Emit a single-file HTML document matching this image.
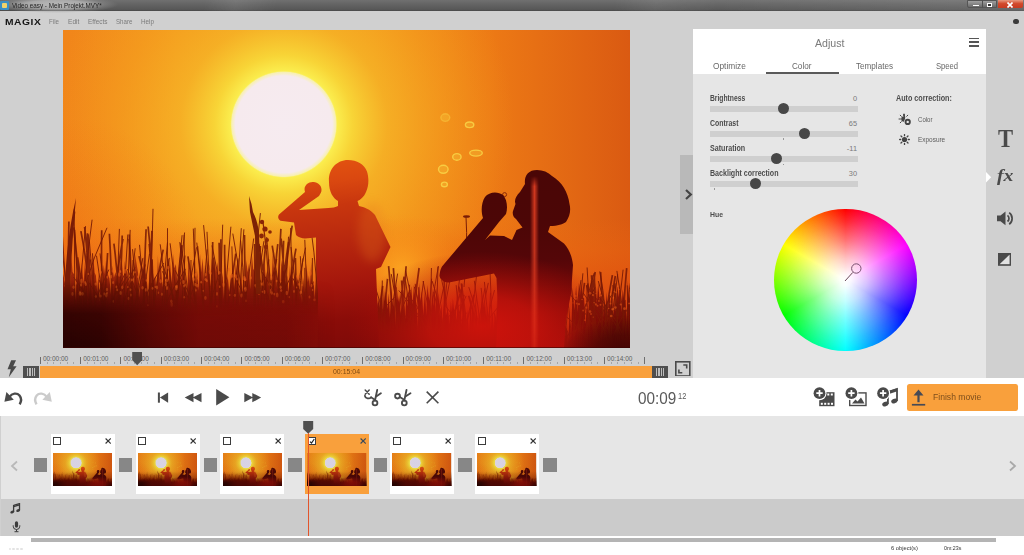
<!DOCTYPE html>
<html><head><meta charset="utf-8">
<style>
*{box-sizing:border-box;margin:0;padding:0}
html,body{width:1024px;height:555px;overflow:hidden;background:#d0d0d0;font-family:"Liberation Sans",sans-serif;color:#444}
.a{position:absolute}
.t{position:absolute;white-space:nowrap;line-height:1}
#title{left:0;top:0;width:1024px;height:11.3px;background:linear-gradient(100deg,rgba(255,255,255,0) 20%,rgba(255,255,255,.08) 23%,rgba(255,255,255,0) 27%,rgba(255,255,255,0) 60%,rgba(255,255,255,.07) 64%,rgba(255,255,255,.02) 70%,rgba(255,255,255,.1) 100%),linear-gradient(#707070 0,#626262 45%,#585858 85%,#484848 100%)}
#panel{left:693px;top:29px;width:292.5px;height:349px;background:#e6e6e6}
#phead{left:0;top:0;width:292.5px;height:45px;background:#fff}
.tab{font-size:9.3px;color:#686868;top:32.5px}
.lbl{font-size:8.2px;font-weight:bold;color:#4c4c4c;left:16.5px;margin-top:1.2px}
.val{font-size:7.4px;color:#7a7a7a;text-align:right;width:30px;left:134px}
.track{position:absolute;left:16.5px;width:148.5px;height:6px;background:#cfcfcf}
.knob{position:absolute;width:11px;height:11px;border-radius:50%;background:#484848}
#transport{left:0;top:378.3px;width:1024px;height:38px;background:#fff}
#story{left:1px;top:416px;width:1023px;height:83.2px;background:#e6e6e6}
#audio{left:1px;top:499.200px;width:1023px;height:36.500px;background:#cbcbcb}
#status{left:0;top:536px;width:1024px;height:19px;background:#fff}
.card{position:absolute;top:434px;width:64px;height:59.5px;background:#fff}
.card.sel{background:#f9a03c}
.cb{position:absolute;left:2.5px;top:2.7px;width:8.3px;height:8.3px;border:1.1px solid #3c3c3c;background:#fff}
.tr{position:absolute;top:458.3px;width:13.5px;height:13.5px;background:#878787}
.rl{font-size:6.5px;color:#5e5e5e;top:355.5px}
</style></head><body>
<!-- title bar -->
<div id="title" class="a"></div>
<div class="a" style="left:-6px;top:-4px;width:124px;height:17px;background:radial-gradient(ellipse closest-side at center,rgba(200,200,200,.85) 0,rgba(190,190,190,.75) 50%,rgba(150,150,150,.4) 78%,rgba(110,110,110,0) 100%)"></div>
<div class="a" style="left:0;top:.5px;width:8.5px;height:9px;background:#3c8fc4;border-radius:1px"></div>
<div class="a" style="left:2px;top:2.5px;width:5px;height:5px;background:#f2d36a;border-radius:1px"></div>
<div class="t" id="ttl" style="transform-origin:0 0;transform:scaleX(0.9006);left:12px;top:1.8px;font-size:7px;color:#222">Video easy - Mein Projekt.MVY*</div>
<div class="a" style="left:967px;top:0;width:30px;height:8px;background:linear-gradient(#a0a0a0,#6a6a6a);border-radius:0 0 0 2px;border:0.5px solid #555"></div>
<div class="a" style="left:982px;top:0;width:1px;height:8px;background:#505050"></div>
<div class="a" style="left:997.5px;top:0;width:25px;height:8px;background:linear-gradient(#e89a80,#d24a2c 45%,#c83a20);border-radius:0 0 2px 0"></div>
<div class="a" style="left:972.500px;top:4.500px;width:6px;height:1.500px;background:#fff"></div>
<div class="a" style="left:987px;top:2.500px;width:5px;height:4.500px;border:1.300px solid #fff;background:#333"></div>
<svg class="a" style="left:1007px;top:1.500px" width="6" height="6" viewBox="0 0 6 6"><path d="M.5,.5L5.5,5.5M5.5,.5L.5,5.5" stroke="#fff" stroke-width="1.600"/></svg>
<!-- menu -->
<div class="t" id="magix" style="transform-origin:0 0;transform:scaleX(1.0484);left:4.700px;top:16.800px;font-size:9.800px;font-weight:bold;color:#151515;letter-spacing:0.500px">MAGIX</div>
<div class="t m" id="m1" style="transform-origin:0 0;transform:scaleX(0.8499);left:49px;top:17.800px;font-size:7.300px;color:#7c7c7c">File</div>
<div class="t m" id="m2" style="transform-origin:0 0;transform:scaleX(0.9063);left:67.500px;top:17.800px;font-size:7.300px;color:#7c7c7c">Edit</div>
<div class="t m" id="m3" style="transform-origin:0 0;transform:scaleX(0.8789);left:87.500px;top:17.800px;font-size:7.300px;color:#7c7c7c">Effects</div>
<div class="t m" id="m4" style="transform-origin:0 0;transform:scaleX(0.8417);left:115.500px;top:17.800px;font-size:7.300px;color:#7c7c7c">Share</div>
<div class="t m" id="m5" style="transform-origin:0 0;transform:scaleX(0.8658);left:140.500px;top:17.800px;font-size:7.300px;color:#7c7c7c">Help</div>
<div class="a" style="left:1013.200px;top:18.500px;width:5.400px;height:5.400px;border-radius:50%;background:#3a3a3a"></div>
<svg class="a" style="left:63px;top:30px" width="567" height="318" viewBox="63 30 567 318" preserveAspectRatio="none">
<defs>
<linearGradient id="sky" x1="0" x2="1" y1="0" y2="0">
<stop offset="0" stop-color="#f1851a"/><stop offset="0.2" stop-color="#f4951c"/><stop offset="0.55" stop-color="#f3921a"/><stop offset="0.75" stop-color="#ed7a15"/><stop offset="1" stop-color="#da5a12"/>
</linearGradient>
<radialGradient id="halo" gradientUnits="userSpaceOnUse" cx="283.800" cy="124.300" r="230">
<stop offset="0" stop-color="#fbf050"/><stop offset="0.225" stop-color="#fbf050"/><stop offset="0.3" stop-color="#f8d838" stop-opacity=".95"/><stop offset="0.45" stop-color="#f6b828" stop-opacity=".75"/><stop offset="0.7" stop-color="#f5a420" stop-opacity=".5"/><stop offset="1" stop-color="#f39a1e" stop-opacity="0"/>
</radialGradient>
<radialGradient id="sun" gradientUnits="userSpaceOnUse" cx="283.800" cy="124.300" r="53.800">
<stop offset="0" stop-color="#f6ebf0"/><stop offset="0.9" stop-color="#f6eaee"/><stop offset="0.97" stop-color="#f8f0b0"/><stop offset="1" stop-color="#fbf050" stop-opacity="0"/>
</radialGradient>
<linearGradient id="warm" gradientUnits="userSpaceOnUse" x1="0" x2="0" y1="218" y2="310">
<stop offset="0" stop-color="#ee6a10" stop-opacity="0"/><stop offset=".35" stop-color="#ec6210" stop-opacity=".36"/><stop offset=".67" stop-color="#e4500e" stop-opacity=".58"/><stop offset="1" stop-color="#d83a0c" stop-opacity=".76"/>
</linearGradient>
<linearGradient id="gm" gradientUnits="userSpaceOnUse" x1="0" x2="0" y1="254" y2="322">
<stop offset="0" stop-color="#9a2408" stop-opacity=".72"/><stop offset="0.5" stop-color="#861608" stop-opacity=".93"/><stop offset="1" stop-color="#700c06"/>
</linearGradient>
<linearGradient id="haze" gradientUnits="userSpaceOnUse" x1="0" x2="0" y1="262" y2="348">
<stop offset="0" stop-color="#9a1408"/><stop offset="0.45" stop-color="#8e0e08"/><stop offset="1" stop-color="#860c08"/>
</linearGradient>
<linearGradient id="boy" gradientUnits="userSpaceOnUse" x1="330" x2="350" y1="160" y2="348">
<stop offset="0" stop-color="#e25210"/><stop offset="0.11" stop-color="#da4810"/><stop offset="0.24" stop-color="#c8360e"/><stop offset="0.43" stop-color="#b8280e"/><stop offset="0.66" stop-color="#a4160c"/><stop offset="0.85" stop-color="#8a0c08"/><stop offset="1" stop-color="#800a08"/>
</linearGradient>
<linearGradient id="man" gradientUnits="userSpaceOnUse" x1="0" x2="0" y1="170" y2="348">
<stop offset="0" stop-color="#4a0606"/><stop offset="0.3" stop-color="#4c0606"/><stop offset="0.5" stop-color="#540608"/><stop offset="0.65" stop-color="#6e0808"/><stop offset="0.8" stop-color="#8e0a08"/><stop offset="1" stop-color="#a80c0a"/>
</linearGradient>
<radialGradient id="glow" gradientUnits="userSpaceOnUse" cx="482" cy="326" r="135" gradientTransform="matrix(1 0 0 .55 0 146.7)">
<stop offset="0" stop-color="#d8140c" stop-opacity=".85"/><stop offset="0.4" stop-color="#cc140c" stop-opacity=".7"/><stop offset="0.7" stop-color="#ba120a" stop-opacity=".35"/><stop offset="1" stop-color="#b00c08" stop-opacity="0"/>
</radialGradient>
<radialGradient id="hot" gradientUnits="userSpaceOnUse" cx="402" cy="272" r="60">
<stop offset="0" stop-color="#ffb024" stop-opacity=".85"/><stop offset="0.5" stop-color="#fa9a1c" stop-opacity=".5"/><stop offset="1" stop-color="#f68a18" stop-opacity="0"/>
</radialGradient>
<linearGradient id="leftdark" gradientUnits="userSpaceOnUse" x1="63" x2="335" y1="0" y2="0">
<stop offset="0" stop-color="#1c0101" stop-opacity=".92"/><stop offset=".14" stop-color="#1c0101" stop-opacity=".85"/><stop offset=".32" stop-color="#1e0101" stop-opacity=".5"/><stop offset=".5" stop-color="#220202" stop-opacity=".24"/><stop offset=".82" stop-color="#220202" stop-opacity=".2"/><stop offset="1" stop-color="#220202" stop-opacity="0"/>
</linearGradient>
<radialGradient id="rightdark" gradientUnits="userSpaceOnUse" cx="625" cy="352" r="62" gradientTransform="matrix(1 0 0 .55 0 158.4)">
<stop offset="0" stop-color="#2a0202" stop-opacity=".75"/><stop offset=".5" stop-color="#2a0202" stop-opacity=".5"/><stop offset="1" stop-color="#2a0202" stop-opacity="0"/>
</radialGradient>
<linearGradient id="fadeb" gradientUnits="userSpaceOnUse" x1="0" x2="0" y1="280" y2="348">
<stop offset="0" stop-color="#fff" stop-opacity="0"/><stop offset=".5" stop-color="#fff" stop-opacity=".85"/><stop offset="1" stop-color="#fff" stop-opacity="1"/>
</linearGradient>
<mask id="mb"><rect x="63" y="280" width="567" height="68" fill="url(#fadeb)"/></mask>
<filter id="bl" x="-10%" y="-30%" width="120%" height="160%" color-interpolation-filters="sRGB"><feGaussianBlur stdDeviation="9"/></filter>
<filter id="bl2" x="-50%" y="-50%" width="200%" height="200%" color-interpolation-filters="sRGB"><feGaussianBlur stdDeviation="5"/></filter>
<linearGradient id="streak" gradientUnits="userSpaceOnUse" x1="530" x2="539" y1="0" y2="0"><stop offset="0" stop-color="#ff4a28" stop-opacity="0"/><stop offset=".5" stop-color="#ff4a28" stop-opacity=".75"/><stop offset="1" stop-color="#ff4a28" stop-opacity="0"/></linearGradient>
<linearGradient id="sfade" gradientUnits="userSpaceOnUse" x1="0" x2="0" y1="176" y2="348"><stop offset="0" stop-color="#fff" stop-opacity="0"/><stop offset=".06" stop-color="#fff" stop-opacity="1"/><stop offset=".45" stop-color="#fff" stop-opacity=".85"/><stop offset="1" stop-color="#fff" stop-opacity=".35"/></linearGradient>
<mask id="ms"><rect x="530" y="176" width="9" height="172" fill="url(#sfade)"/></mask>
<radialGradient id="ll" gradientUnits="userSpaceOnUse" cx="55" cy="262" r="150"><stop offset="0" stop-color="#ee6210" stop-opacity=".42"/><stop offset=".5" stop-color="#ee6210" stop-opacity=".2"/><stop offset="1" stop-color="#ee6210" stop-opacity="0"/></radialGradient>
<clipPath id="vc"><rect x="63" y="30" width="567" height="318"/></clipPath>
</defs>
<g id="scene" clip-path="url(#vc)"><rect x="63" y="30" width="567" height="318" fill="url(#sky)"/>
<rect x="63" y="30" width="567" height="318" fill="url(#halo)"/>
<circle cx="283.800" cy="124.300" r="53.800" fill="url(#sun)"/>
<rect x="63" y="215" width="567" height="133" fill="url(#warm)"/>
<rect x="63" y="120" width="160" height="228" fill="url(#ll)"/>
<rect x="340" y="210" width="125" height="125" fill="url(#hot)"/>
<g fill="#f7c23a" fill-opacity=".35" stroke="#f9d84a" stroke-width="1.400" stroke-opacity=".8">
<ellipse cx="445.300" cy="117.600" rx="4.500" ry="3.800" stroke-opacity=".4"/><ellipse cx="469.600" cy="124.800" rx="4.200" ry="2.800"/><ellipse cx="476" cy="153.100" rx="6.300" ry="3"/><ellipse cx="456.900" cy="156.900" rx="4.200" ry="3.300"/><ellipse cx="443.300" cy="169.300" rx="4.800" ry="4"/><ellipse cx="444.400" cy="184.400" rx="3" ry="2.300"/>
</g>
<path d="M60,350 L60.0,270.9 L61.6,296.9 L63.3,273.8 L65.0,284.3 L66.4,278.6 L67.8,306.7 L68.9,267.3 L70.0,288.1 L71.4,256.3 L72.5,271.9 L74.2,274.4 L75.3,300.3 L76.3,270.8 L77.3,280.9 L79.0,261.0 L80.1,290.7 L81.8,262.9 L83.5,283.7 L85.0,260.9 L86.8,284.7 L88.5,277.4 L89.7,294.7 L90.8,259.5 L91.7,275.5 L93.2,256.1 L94.7,272.8 L95.9,275.6 L97.2,292.0 L98.5,272.9 L99.5,302.4 L100.4,274.0 L102.1,284.4 L103.7,264.8 L105.1,275.0 L106.0,260.3 L107.8,274.3 L109.4,278.3 L111.1,295.2 L112.3,265.6 L113.9,277.8 L115.5,272.1 L117.2,282.9 L118.9,255.2 L120.1,277.4 L121.9,261.2 L123.6,282.1 L124.8,260.6 L125.8,272.2 L126.9,269.5 L128.7,282.8 L129.6,276.7 L131.0,294.8 L132.1,267.3 L133.7,286.4 L135.0,254.3 L136.8,265.0 L138.1,273.1 L139.1,297.8 L140.9,268.1 L142.5,280.3 L143.8,256.6 L145.4,272.5 L146.7,277.0 L148.4,306.5 L149.7,264.7 L151.3,284.3 L152.4,262.7 L153.5,280.2 L155.3,276.0 L156.7,296.0 L157.9,255.1 L159.1,280.8 L160.7,261.7 L162.4,287.2 L163.9,268.9 L165.5,286.2 L167.0,259.7 L168.3,285.1 L169.9,260.1 L171.6,283.0 L173.0,253.3 L174.4,268.3 L175.9,264.1 L177.6,287.1 L179.2,261.3 L180.7,286.1 L182.3,261.4 L184.0,288.8 L185.5,276.4 L187.2,296.8 L188.6,257.0 L190.3,285.7 L191.6,269.6 L193.1,294.2 L194.2,271.7 L195.6,295.0 L196.9,268.0 L198.5,290.7 L200.1,253.7 L201.1,272.5 L202.6,258.3 L204.1,280.9 L205.0,264.3 L206.1,275.4 L207.2,260.6 L208.2,274.5 L209.2,264.2 L210.4,286.4 L211.8,258.7 L213.5,268.7 L214.8,259.7 L216.1,272.0 L217.7,262.0 L218.7,284.2 L219.6,266.1 L220.8,287.7 L222.6,272.6 L223.9,298.9 L225.4,261.9 L226.4,283.8 L227.8,276.0 L229.6,298.1 L230.8,274.4 L231.7,286.6 L233.1,267.8 L234.1,290.4 L235.8,262.0 L237.1,276.5 L238.3,276.3 L239.5,305.6 L241.2,267.3 L242.4,296.9 L243.7,263.0 L244.9,292.7 L246.3,259.9 L247.6,272.3 L249.0,263.6 L250.2,289.3 L251.8,253.3 L253.2,268.8 L255.0,271.8 L256.1,287.1 L257.1,276.7 L258.3,298.9 L259.6,268.5 L261.1,293.3 L262.1,271.2 L263.2,291.9 L264.4,260.1 L265.8,279.4 L267.0,270.9 L268.5,281.6 L269.6,263.9 L271.3,291.7 L272.7,253.3 L274.3,271.9 L275.7,270.0 L277.2,289.6 L278.9,262.3 L280.2,289.3 L281.3,260.1 L282.9,271.4 L284.6,269.7 L285.8,285.4 L287.4,274.9 L288.5,294.4 L289.9,264.9 L291.1,278.0 L292.5,272.5 L293.5,287.1 L295.1,272.0 L296.6,282.5 L298.1,276.5 L299.9,300.5 L300.9,280.2 L302.0,303.1 L303.7,277.1 L304.8,292.9 L306.5,263.6 L307.9,281.9 L309.0,274.9 L309.9,287.1 L311.2,261.7 L312.1,283.2 L313.7,281.1 L314.7,299.7 L315.9,274.4 L317.2,303.2 L318.5,261.3 L320.0,274.4 L321.5,272.1 L323.2,293.2 L324.6,266.3 L326.0,281.4 L327.6,272.4 L328.6,287.1 L329.9,277.7 L330.9,301.9 L332.4,288.0 L333.9,299.9 L334.9,300.3 L336.0,327.8 L337.4,293.8 L339.0,304.3 L340.5,287.3 L341.6,316.3 L343.1,291.4 L344.1,320.8 L345.6,305.7 L346.6,328.2 L347.8,291.6 L349.0,313.9 L350.3,295.3 L351.3,321.9 L352.8,305.3 L354.1,332.3 L355.4,300.2 L356.8,325.0 L358.1,288.3 L359.0,302.4 L360.0,307.3 L361.3,332.5 L362.2,297.3 L363.9,319.7 L365.2,297.2 L366.2,310.3 L367.2,295.0 L368.5,322.6 L369.5,292.1 L370.6,305.3 L371.8,291.6 L373.1,302.3 L374.9,294.9 L376.6,318.6 L378.1,297.3 L379.9,309.7 L381.4,289.0 L382.9,313.6 L383.9,286.8 L384.8,301.4 L385.8,291.6 L387.6,308.9 L388.8,293.2 L389.9,317.9 L391.5,285.9 L392.6,309.4 L394.3,297.5 L395.6,327.0 L396.5,283.5 L398.1,301.7 L399.1,295.2 L400.9,315.5 L402.1,284.3 L403.0,312.2 L404.4,304.5 L405.3,319.3 L406.3,291.5 L407.2,306.6 L408.5,289.3 L409.4,300.1 L411.2,286.3 L412.6,304.4 L414.0,284.0 L415.1,296.2 L416.5,304.1 L418.0,331.2 L419.1,282.4 L420.4,302.1 L421.9,291.0 L423.3,315.6 L425.0,289.4 L426.3,315.9 L427.4,284.8 L428.6,296.5 L430.2,301.7 L431.4,314.3 L432.4,287.9 L433.4,306.4 L434.8,287.9 L435.7,311.9 L436.7,286.8 L437.8,304.3 L438.8,292.1 L440.0,317.1 L441.4,303.5 L442.9,328.7 L444.3,292.6 L445.9,315.7 L447.7,309.5 L449.2,324.8 L450.9,301.2 L451.9,312.5 L452.9,298.3 L454.4,314.0 L455.4,310.3 L456.8,320.9 L457.7,295.1 L459.0,322.3 L460.7,306.7 L461.8,325.3 L463.1,299.9 L464.0,321.6 L465.6,309.4 L466.6,330.1 L467.6,309.0 L469.0,337.8 L470.6,294.8 L471.8,323.1 L473.1,302.4 L474.4,327.8 L476.1,304.8 L477.9,326.7 L478.9,311.5 L480.1,322.6 L481.9,292.8 L483.3,312.4 L485.0,301.4 L486.1,317.0 L487.2,305.5 L488.4,330.5 L489.6,300.4 L490.7,330.1 L492.3,312.4 L493.8,330.4 L494.8,312.0 L496.2,322.7 L497.2,294.4 L498.8,322.4 L499.8,311.1 L501.0,334.8 L502.7,327.0 L504.3,344.5 L505.2,324.3 L506.7,338.0 L507.9,319.6 L508.8,335.9 L510.1,323.4 L511.6,341.4 L513.4,331.6 L515.1,355.4 L516.6,324.9 L518.3,342.1 L519.7,328.3 L521.1,344.0 L522.0,314.1 L523.2,335.7 L524.8,329.1 L526.0,357.7 L527.2,329.2 L528.1,354.3 L529.6,335.0 L531.3,358.7 L533.0,329.7 L534.4,343.9 L535.8,333.5 L536.9,363.0 L538.3,321.4 L539.2,339.2 L540.3,327.7 L542.0,355.9 L543.4,321.3 L544.4,345.1 L545.8,329.2 L547.1,356.9 L548.2,319.3 L549.3,341.8 L551.0,316.0 L552.5,341.3 L553.6,313.5 L555.0,340.1 L556.7,329.5 L557.9,348.0 L559.3,333.7 L560.5,349.3 L561.9,335.2 L563.0,345.8 L564.0,325.5 L565.5,339.2 L566.5,326.3 L568.0,350.1 L569.6,313.5 L570.9,340.2 L572.7,287.6 L574.3,310.5 L576.1,285.5 L577.6,312.3 L578.9,282.4 L580.0,295.6 L581.0,283.6 L582.4,295.7 L584.0,297.7 L585.6,323.7 L587.2,302.2 L589.0,324.7 L590.7,282.5 L591.7,293.8 L592.8,289.0 L594.1,312.6 L595.7,282.0 L596.9,302.9 L598.2,282.8 L599.6,300.3 L601.1,291.9 L602.9,320.8 L603.9,298.2 L605.4,314.2 L606.4,291.5 L607.6,316.2 L609.4,289.2 L610.5,309.1 L612.1,298.9 L613.5,314.9 L614.7,300.4 L616.0,311.4 L617.3,285.7 L618.8,297.2 L620.0,282.3 L621.3,312.0 L622.7,289.3 L624.4,301.1 L625.6,299.5 L626.5,324.8 L627.8,280.4 L628.9,299.6 L630.1,292.4 L631.1,306.8 L632.9,290.6 L634.2,302.3 L634,350Z" fill="url(#gm)"/>
<path d="M63.0,348 Q65.8,279.9 74.9,211.7M67.1,348 Q65.7,286.4 72.5,224.7M70.1,348 Q64.7,276.2 60.5,204.5M71.5,348 Q67.9,284.6 58.3,221.2M74.2,348 Q75.2,278.7 74.2,209.3M76.0,348 Q79.6,287.0 85.5,226.1M77.7,348 Q79.0,288.9 74.9,229.8M80.6,348 Q83.3,283.9 92.1,219.7M96.1,348 Q94.9,300.6 92.5,253.3M98.2,348 Q94.0,294.7 89.4,241.3M106.8,348 Q107.0,300.7 100.0,253.4M108.6,348 Q103.9,301.8 96.5,255.7M115.0,348 Q117.3,288.5 119.4,228.9M121.2,348 Q124.0,291.2 127.8,234.5M124.0,348 Q129.0,298.2 135.2,248.3M126.7,348 Q126.8,289.0 130.2,229.9M129.0,348 Q134.7,303.1 142.8,258.1M133.5,348 Q131.8,304.0 133.0,259.9M135.7,348 Q131.0,293.4 128.8,238.9M138.1,348 Q141.9,300.9 149.5,253.7M140.9,348 Q138.4,298.6 132.5,249.2M147.5,348 Q145.0,296.4 139.5,244.8M151.0,348 Q150.4,278.4 153.0,208.8M153.9,348 Q154.3,303.7 152.4,259.3M157.9,348 Q154.3,296.0 148.9,244.0M160.4,348 Q161.5,295.1 167.5,242.3M163.2,348 Q162.5,302.9 169.4,257.9M165.6,348 Q168.3,288.1 167.5,228.2M168.5,348 Q167.7,296.2 160.2,244.3M170.9,348 Q176.6,291.6 182.1,235.2M173.1,348 Q178.1,290.3 184.6,232.5M177.2,348 Q173.9,303.3 168.0,258.7M178.7,348 Q182.3,301.8 185.0,255.6M181.6,348 Q177.1,295.6 170.1,243.3M183.4,348 Q185.7,291.4 184.1,234.8M185.3,348 Q186.3,297.6 196.5,247.3M188.2,348 Q186.3,295.1 179.8,242.1M190.5,348 Q190.1,304.0 191.0,260.0M192.8,348 Q190.0,295.7 180.6,243.3M195.7,348 Q193.3,287.9 195.0,227.8M198.4,348 Q195.3,288.3 193.3,228.6M203.8,348 Q202.2,298.7 207.1,249.4M205.3,348 Q203.3,295.3 196.8,242.6M207.2,348 Q203.0,297.1 197.7,246.1M212.1,348 Q209.7,289.9 207.0,231.8M213.8,348 Q209.7,286.5 203.6,225.1M217.5,348 Q221.3,286.4 222.7,224.7M223.5,348 Q224.3,287.4 230.9,226.7M225.7,348 Q223.5,296.8 212.0,245.5M229.4,348 Q232.8,304.2 237.9,260.4M231.8,348 Q234.7,297.2 231.9,246.4M233.5,348 Q237.4,288.1 241.3,228.2M236.4,348 Q239.8,288.7 243.9,229.3M238.9,348 Q235.7,303.2 238.0,258.5M241.3,348 Q245.4,293.3 253.7,238.5M243.7,348 Q245.9,294.2 240.6,240.5M246.2,348 Q243.5,290.8 232.8,233.6M250.8,348 Q254.5,294.6 263.9,241.2M253.2,348 Q252.2,280.6 260.4,213.1M261.8,348 Q262.9,303.7 268.9,259.5M264.3,348 Q264.9,303.6 276.8,259.2M266.4,348 Q264.7,295.9 259.2,243.8M273.3,348 Q272.1,292.5 266.7,237.0M284.8,348 Q285.0,292.3 288.5,236.7M291.8,348 Q294.2,297.9 305.5,247.7M294.4,348 Q291.1,287.9 290.7,227.9M298.5,348 Q297.1,303.1 303.0,258.3M301.0,348 Q297.6,297.5 291.0,247.0M302.9,348 Q305.9,307.9 304.8,267.8M305.8,348 Q303.3,302.1 300.3,256.2M308.7,348 Q306.9,293.9 304.8,239.8M310.6,348 Q312.9,303.0 312.4,258.0M314.7,348 Q318.0,300.7 316.6,253.4M319.9,348 Q318.9,284.1 309.9,220.2M321.6,348 Q323.4,306.0 322.2,264.1M323.5,348 Q323.7,292.6 323.3,237.1M326.0,348 Q329.3,293.5 335.1,239.1M328.7,348 Q332.7,295.0 341.5,242.0M331.2,348 Q328.5,308.6 328.9,269.1M337.1,348 Q335.3,321.9 326.3,295.9M340.2,348 Q339.7,319.7 332.8,291.4M341.9,348 Q341.1,319.7 332.7,291.3M344.1,348 Q344.8,308.3 337.4,268.6M351.9,348 Q348.3,311.2 338.2,274.3M354.5,348 Q350.1,310.2 344.9,272.3M358.5,348 Q356.9,320.3 344.5,292.6M361.2,348 Q360.3,321.5 367.3,295.0M363.3,348 Q364.6,305.8 373.3,263.6M365.3,348 Q363.5,295.1 357.1,242.1M366.9,348 Q363.0,308.0 361.6,268.0M369.0,348 Q367.9,310.1 374.2,272.3M371.0,348 Q369.2,305.6 375.4,263.2M373.5,348 Q370.3,318.7 372.4,289.5M376.2,348 Q374.0,319.3 370.3,290.6M380.6,348 Q382.3,314.2 382.3,280.5M383.3,348 Q381.5,316.8 371.9,285.6M386.4,348 Q386.0,316.5 374.5,284.9M388.6,348 Q390.2,310.8 397.6,273.6M390.6,348 Q394.9,317.6 396.2,287.3M403.0,348 Q398.5,311.0 391.3,274.1M408.4,348 Q409.1,316.3 409.6,284.7M412.9,348 Q411.5,314.7 405.6,281.4M414.5,348 Q415.2,309.3 405.5,270.6M416.9,348 Q417.9,314.5 423.6,281.0M419.6,348 Q417.2,317.6 418.7,287.2M421.9,348 Q420.6,315.9 415.2,283.8M424.2,348 Q424.5,317.4 414.3,286.8M426.3,348 Q429.2,313.4 431.6,278.7M428.5,348 Q430.4,307.1 438.4,266.1M430.7,348 Q430.5,308.0 431.4,268.0M432.6,348 Q436.8,317.2 443.8,286.4M435.2,348 Q429.9,314.5 423.1,281.0M437.3,348 Q435.9,307.4 438.0,266.7M439.3,348 Q443.5,307.9 452.3,267.9M441.3,348 Q443.4,309.1 448.2,270.2M444.5,348 Q443.8,314.6 432.2,281.1M446.5,348 Q440.5,319.9 433.7,291.9M450.1,348 Q450.0,313.8 441.6,279.7M452.2,348 Q453.9,321.9 466.1,295.9M453.8,348 Q454.3,311.3 460.1,274.6M456.6,348 Q460.6,316.1 462.1,284.2M459.7,348 Q459.8,316.6 456.2,285.2M464.4,348 Q464.2,322.8 462.7,297.7M470.4,348 Q471.5,308.2 477.4,268.5M472.6,348 Q472.7,321.9 476.6,295.7M475.2,348 Q478.7,318.2 484.9,288.4M480.1,348 Q480.6,315.5 488.3,282.9M481.8,348 Q479.2,317.5 468.8,287.1M484.1,348 Q478.8,314.4 474.3,280.7M486.1,348 Q485.7,319.0 494.5,290.1M488.4,348 Q484.4,317.9 481.1,287.9M489.8,348 Q488.5,320.4 490.5,292.8M491.2,348 Q487.5,314.9 484.4,281.9M493.9,348 Q491.3,310.7 490.1,273.4M495.3,348 Q496.6,318.5 508.9,289.0M497.9,348 Q498.5,323.4 508.8,298.8M499.7,348 Q504.7,316.6 513.6,285.3M501.4,348 Q499.3,330.6 494.1,313.1M503.3,348 Q501.3,329.7 506.4,311.3M505.7,348 Q509.2,332.7 511.1,317.3M508.5,348 Q510.2,328.3 518.1,308.6M511.8,348 Q514.4,328.2 510.4,308.5M514.6,348 Q512.8,331.1 502.6,314.2M516.4,348 Q514.1,333.1 509.7,318.2M518.9,348 Q519.1,330.4 509.2,312.8M521.5,348 Q517.1,325.5 508.1,303.0M524.9,348 Q522.8,327.5 527.6,307.0M526.9,348 Q526.9,327.4 532.7,306.8M529.4,348 Q529.1,331.7 523.2,315.4M532.7,348 Q535.0,333.0 534.5,318.1M534.5,348 Q533.6,326.1 526.5,304.1M537.4,348 Q535.9,323.9 541.1,299.8M542.4,348 Q540.5,329.6 532.6,311.2M544.6,348 Q541.1,321.2 540.8,294.4M547.4,348 Q546.4,329.6 549.2,311.1M549.0,348 Q551.4,328.2 561.7,308.5M551.9,348 Q552.2,325.0 555.3,301.9M556.8,348 Q552.0,330.8 549.4,313.7M558.8,348 Q560.1,330.7 563.0,313.4M561.0,348 Q559.0,324.3 556.4,300.6M562.9,348 Q567.0,325.6 568.1,303.1M571.3,348 Q571.1,308.5 561.8,268.9M572.7,348 Q574.1,314.1 581.0,280.1M574.4,348 Q574.8,309.1 569.7,270.1M577.1,348 Q579.3,310.7 582.9,273.3M581.1,348 Q582.2,310.5 594.2,273.0M587.5,348 Q586.6,316.5 587.0,285.0M590.1,348 Q590.1,307.7 587.1,267.5M606.1,348 Q607.1,309.7 599.8,271.4M610.6,348 Q611.3,311.2 617.7,274.4M611.9,348 Q608.7,314.5 598.3,281.1M614.6,348 Q618.7,308.9 623.1,269.7M620.4,348 Q617.8,316.5 612.8,285.1M625.7,348 Q625.6,309.1 632.4,270.2M627.9,348 Q623.0,309.5 616.9,270.9M629.9,348 Q628.2,316.7 627.2,285.4M179.3,348 Q182.5,315.0 195.6,282.0M397.6,348 Q402.3,325.7 421.2,303.5M609.8,348 Q615.9,320.2 640.4,292.5M567.3,348 Q561.5,344.2 538.7,340.3M601.3,348 Q595.2,321.5 570.7,295.1M361.2,348 Q367.9,322.6 394.5,297.3M94.4,348 Q101.0,312.2 127.2,276.4M549.4,348 Q545.9,341.9 532.0,335.7M482.6,348 Q488.2,333.8 510.9,319.6M301.2,348 Q296.7,314.3 278.7,280.6M370.4,348 Q365.3,323.0 344.8,298.1M319.5,348 Q314.2,313.1 292.7,278.1M592.2,348 Q596.5,319.4 613.7,290.8M208.4,348 Q202.5,311.8 178.7,275.6M625.0,348 Q619.0,322.5 594.9,297.1M572.7,348 Q566.3,318.9 540.9,289.8M431.8,348 Q425.6,330.2 400.8,312.4M353.6,348 Q349.9,334.9 334.9,321.8M84.7,348 Q89.6,308.8 108.8,269.6M367.6,348 Q362.7,333.3 342.8,318.6M609.3,348 Q604.0,320.5 583.2,293.0M510.1,348 Q506.8,340.1 493.6,332.3M345.1,348 Q338.9,323.2 314.2,298.4M149.2,348 Q144.9,308.6 127.5,269.1M590.6,348 Q584.3,329.4 558.9,310.9M129.7,348 Q132.8,306.3 145.3,264.5M450.3,348 Q453.6,330.3 466.7,312.6M624.1,348 Q630.6,320.1 656.6,292.2M476.3,348 Q480.8,327.0 498.9,305.9M526.8,348 Q532.4,342.7 555.0,337.5M181.5,348 Q177.8,306.6 163.0,265.2M392.7,348 Q396.2,319.0 410.1,290.0M597.5,348 Q601.7,325.1 618.6,302.3M67.6,348 Q61.6,288.4 37.8,228.7M267.7,348 Q271.5,307.9 286.7,267.8M103.6,348 Q109.9,307.8 135.0,267.6M295.3,348 Q288.5,309.7 261.5,271.4M259.7,348 Q254.8,312.8 234.9,277.6M129.8,348 Q136.6,305.5 163.8,263.1M107.4,348 Q100.7,312.6 73.7,277.2M283.2,348 Q278.4,313.3 259.2,278.6M99.5,348 Q104.8,309.7 126.1,271.5M437.0,348 Q431.3,321.8 408.6,295.7M202.0,348 Q196.6,309.1 175.1,270.3M555.0,348 Q559.4,338.9 576.9,329.7M529.1,348 Q523.9,344.6 503.1,341.3M119.5,348 Q113.3,315.2 88.7,282.4M72.2,348 Q79.1,287.9 107.0,227.8M526.3,348 Q521.4,344.9 501.9,341.8M268.5,348 Q273.4,309.8 293.1,271.6M433.3,348 Q426.4,319.3 398.8,290.5M626.8,348 Q621.2,322.4 598.8,296.9M461.2,348 Q454.2,337.0 426.2,325.9M435.7,348 Q430.6,328.4 410.4,308.8M394.9,348 Q389.8,324.7 369.6,301.4M117.5,348 Q113.8,313.9 99.1,279.9M431.6,348 Q437.3,326.3 459.9,304.6M613.9,348 Q609.2,323.4 590.2,298.8M151.5,348 Q158.3,308.6 185.4,269.3M571.8,348 Q576.5,317.8 595.1,287.6M381.7,348 Q377.5,330.7 360.7,313.4M351.2,348 Q347.6,324.1 333.6,300.1M113.2,348 Q117.6,310.4 135.2,272.8M202.7,348 Q205.9,311.4 218.8,274.8M186.6,348 Q181.8,309.6 162.4,271.3M546.2,348 Q542.6,335.3 528.3,322.6M383.5,348 Q378.9,320.7 360.3,293.3M69.1,348 Q63.1,289.4 39.4,230.8M467.8,348 Q463.1,326.5 444.7,304.9M343.3,348 Q338.7,333.9 320.5,319.8" fill="none" stroke="#761806" stroke-width="1" stroke-opacity=".9"/>
<path d="M65.3,348 Q68.0,284.7 68.9,221.4M82.6,348 Q83.1,303.7 90.4,259.4M84.4,348 Q80.2,287.6 73.7,227.3M85.8,348 Q85.9,290.7 87.5,233.3M88.4,348 Q85.2,302.6 77.6,257.3M90.1,348 Q91.1,287.5 84.6,227.0M92.1,348 Q92.2,289.6 80.9,231.2M93.8,348 Q89.8,291.1 88.1,234.2M100.9,348 Q105.3,300.5 107.6,253.0M103.9,348 Q100.9,289.1 101.7,230.2M111.3,348 Q112.5,293.4 123.0,238.9M113.1,348 Q112.6,290.9 109.4,233.8M116.5,348 Q120.7,291.7 122.2,235.4M118.9,348 Q120.7,295.8 113.9,243.6M131.0,348 Q132.6,291.3 129.3,234.5M143.8,348 Q143.3,288.7 146.1,229.3M145.9,348 Q150.1,289.4 151.9,230.9M149.7,348 Q152.8,298.8 163.2,249.6M152.4,348 Q151.0,302.1 139.0,256.1M156.6,348 Q154.3,287.2 148.1,226.5M174.5,348 Q176.3,296.6 182.0,245.1M201.3,348 Q196.1,302.2 187.9,256.3M209.6,348 Q212.5,295.0 212.7,241.9M215.6,348 Q216.8,302.8 213.4,257.5M219.0,348 Q220.2,295.4 219.1,242.8M220.5,348 Q221.0,293.6 220.9,239.2M222.1,348 Q228.1,300.8 235.8,253.7M227.3,348 Q224.8,296.3 224.6,244.7M247.9,348 Q244.7,291.5 244.5,235.0M254.7,348 Q255.4,296.0 254.6,244.0M257.6,348 Q257.5,296.9 260.4,245.9M260.0,348 Q260.3,294.4 266.1,240.8M268.9,348 Q271.7,296.1 277.8,244.1M271.3,348 Q268.3,296.3 258.7,244.6M275.9,348 Q280.5,294.9 288.6,241.9M277.4,348 Q277.5,288.4 280.9,228.9M279.9,348 Q282.3,294.3 283.6,240.7M281.6,348 Q281.5,286.9 292.2,225.7M283.4,348 Q280.8,296.8 272.2,245.7M286.5,348 Q286.3,298.3 296.0,248.6M289.2,348 Q286.7,293.3 281.1,238.5M295.8,348 Q296.8,303.0 295.4,258.0M313.3,348 Q317.4,299.9 320.6,251.7M317.4,348 Q316.9,308.8 325.4,269.7M334.2,348 Q331.6,316.2 325.9,284.5M338.7,348 Q341.8,321.9 341.1,295.8M346.0,348 Q344.2,313.1 345.5,278.3M348.9,348 Q349.2,308.6 349.7,269.1M356.3,348 Q360.2,307.4 360.1,266.7M378.0,348 Q377.7,316.9 382.7,285.9M384.9,348 Q383.1,313.5 387.5,278.9M393.0,348 Q392.8,307.0 388.6,266.1M395.0,348 Q397.9,312.3 404.1,276.6M397.6,348 Q396.5,308.0 393.4,268.1M400.1,348 Q403.6,307.1 406.1,266.3M405.5,348 Q404.3,314.2 401.6,280.5M410.2,348 Q413.0,308.0 419.1,268.0M442.8,348 Q445.7,309.2 443.8,270.5M448.3,348 Q451.5,318.4 461.6,288.8M458.0,348 Q457.7,321.4 463.9,294.8M462.0,348 Q466.0,321.3 474.0,294.7M465.8,348 Q465.9,317.3 458.8,286.6M467.6,348 Q466.3,315.6 461.4,283.3M478.1,348 Q476.4,321.9 468.7,295.8M510.2,348 Q508.5,329.5 511.6,311.1M522.9,348 Q524.9,323.8 530.5,299.5M531.3,348 Q528.9,323.9 525.5,299.9M539.4,348 Q538.2,332.7 534.6,317.3M540.9,348 Q539.6,329.0 531.6,309.9M546.0,348 Q544.8,327.9 545.2,307.9M553.7,348 Q555.3,324.3 550.4,300.7M555.2,348 Q557.1,327.8 551.3,307.6M564.4,348 Q564.1,326.6 566.2,305.2M567.0,348 Q564.2,327.5 560.0,307.1M569.2,348 Q567.6,329.2 558.1,310.3M579.8,348 Q579.3,315.4 584.5,282.9M583.1,348 Q589.1,310.0 595.2,272.0M585.6,348 Q590.2,311.6 592.1,275.2M593.1,348 Q595.2,312.6 594.4,277.2M594.7,348 Q592.9,315.6 587.7,283.3M596.5,348 Q594.8,316.6 586.6,285.2M598.2,348 Q593.8,311.6 591.5,275.2M601.0,348 Q603.9,310.1 600.6,272.1M603.8,348 Q605.3,311.6 612.4,275.1M609.0,348 Q608.7,312.0 615.3,276.0M617.6,348 Q618.1,315.7 614.8,283.4M622.8,348 Q622.9,308.0 626.7,268.1" fill="none" stroke="#741606" stroke-width="1.700" stroke-opacity=".85"/>
<g fill="#e8601a" fill-opacity=".55"><ellipse cx="107.0" cy="289.6" rx="1.1" ry="1.8"/><ellipse cx="120.7" cy="293.0" rx="1.2" ry="2.0"/><ellipse cx="197.9" cy="278.6" rx="0.7" ry="1.1"/><ellipse cx="219.3" cy="272.8" rx="1.2" ry="1.7"/><ellipse cx="125.1" cy="271.3" rx="1.3" ry="2.5"/><ellipse cx="296.6" cy="287.5" rx="0.7" ry="1.1"/><ellipse cx="195.8" cy="274.8" rx="1.3" ry="2.0"/><ellipse cx="104.3" cy="293.9" rx="0.8" ry="1.6"/><ellipse cx="184.0" cy="285.9" rx="0.9" ry="1.5"/><ellipse cx="112.9" cy="271.0" rx="1.2" ry="1.8"/><ellipse cx="271.3" cy="277.8" rx="1.3" ry="2.6"/><ellipse cx="264.5" cy="291.9" rx="1.0" ry="2.0"/><ellipse cx="95.7" cy="284.1" rx="1.2" ry="1.7"/><ellipse cx="309.5" cy="296.9" rx="0.9" ry="1.5"/><ellipse cx="183.5" cy="282.1" rx="1.3" ry="2.1"/><ellipse cx="70.2" cy="273.9" rx="1.1" ry="2.4"/><ellipse cx="195.4" cy="284.4" rx="1.0" ry="2.0"/><ellipse cx="122.3" cy="287.3" rx="1.0" ry="1.9"/><ellipse cx="111.2" cy="276.7" rx="0.9" ry="1.9"/><ellipse cx="155.5" cy="287.0" rx="0.9" ry="1.2"/><ellipse cx="80.5" cy="293.7" rx="1.2" ry="1.9"/><ellipse cx="245.5" cy="289.2" rx="1.2" ry="2.6"/><ellipse cx="171.7" cy="304.6" rx="1.3" ry="2.3"/><ellipse cx="298.8" cy="284.4" rx="0.9" ry="1.4"/><ellipse cx="296.9" cy="276.4" rx="0.7" ry="1.4"/><ellipse cx="269.6" cy="284.2" rx="1.2" ry="1.6"/><ellipse cx="131.9" cy="280.0" rx="1.0" ry="1.4"/><ellipse cx="81.5" cy="281.1" rx="1.2" ry="2.6"/><ellipse cx="262.1" cy="284.1" rx="0.9" ry="1.8"/><ellipse cx="203.3" cy="290.8" rx="0.7" ry="1.1"/><ellipse cx="286.8" cy="293.0" rx="1.2" ry="2.2"/><ellipse cx="176.8" cy="286.6" rx="1.2" ry="1.9"/><ellipse cx="205.7" cy="279.6" rx="1.2" ry="1.5"/><ellipse cx="246.0" cy="300.9" rx="0.7" ry="1.3"/><ellipse cx="234.9" cy="295.3" rx="1.1" ry="1.6"/><ellipse cx="171.3" cy="301.3" rx="1.2" ry="1.7"/><ellipse cx="88.3" cy="273.9" rx="0.7" ry="1.2"/><ellipse cx="100.6" cy="296.0" rx="1.1" ry="1.5"/><ellipse cx="206.8" cy="280.8" rx="1.0" ry="1.5"/><ellipse cx="107.3" cy="277.1" rx="0.9" ry="1.7"/><ellipse cx="209.9" cy="271.6" rx="1.1" ry="2.3"/><ellipse cx="269.7" cy="292.9" rx="0.7" ry="1.2"/><ellipse cx="80.0" cy="291.9" rx="0.8" ry="1.5"/><ellipse cx="130.5" cy="289.8" rx="0.9" ry="1.2"/><ellipse cx="166.8" cy="280.4" rx="1.2" ry="1.9"/><ellipse cx="197.3" cy="285.8" rx="1.3" ry="1.7"/><ellipse cx="223.5" cy="284.8" rx="1.1" ry="2.4"/><ellipse cx="145.8" cy="289.9" rx="1.0" ry="1.8"/><ellipse cx="80.0" cy="293.8" rx="1.3" ry="2.0"/><ellipse cx="147.9" cy="305.3" rx="0.8" ry="1.0"/><ellipse cx="82.6" cy="293.8" rx="1.2" ry="1.9"/><ellipse cx="228.9" cy="269.6" rx="1.1" ry="1.8"/><ellipse cx="201.2" cy="282.2" rx="0.9" ry="1.4"/><ellipse cx="76.0" cy="283.1" rx="0.8" ry="1.6"/><ellipse cx="281.2" cy="290.6" rx="1.0" ry="1.4"/><ellipse cx="165.9" cy="284.3" rx="1.1" ry="2.2"/><ellipse cx="85.8" cy="284.2" rx="1.0" ry="1.9"/><ellipse cx="300.8" cy="292.5" rx="1.1" ry="2.1"/><ellipse cx="241.4" cy="295.6" rx="1.1" ry="2.1"/><ellipse cx="128.5" cy="298.5" rx="0.9" ry="1.7"/><ellipse cx="283.2" cy="301.7" rx="1.3" ry="1.7"/><ellipse cx="146.5" cy="280.5" rx="0.9" ry="1.3"/><ellipse cx="210.7" cy="273.3" rx="0.9" ry="1.8"/><ellipse cx="261.2" cy="283.8" rx="0.8" ry="1.6"/><ellipse cx="251.0" cy="277.8" rx="0.9" ry="1.6"/><ellipse cx="245.0" cy="279.2" rx="1.3" ry="2.0"/><ellipse cx="130.9" cy="295.0" rx="0.8" ry="1.5"/><ellipse cx="116.4" cy="287.0" rx="0.9" ry="1.4"/><ellipse cx="314.2" cy="283.9" rx="1.0" ry="1.7"/><ellipse cx="137.9" cy="276.8" rx="0.9" ry="1.4"/><ellipse cx="113.3" cy="301.5" rx="0.7" ry="1.4"/><ellipse cx="312.6" cy="290.0" rx="0.7" ry="1.2"/><ellipse cx="73.5" cy="287.3" rx="1.1" ry="1.7"/><ellipse cx="65.0" cy="285.7" rx="0.8" ry="1.2"/><ellipse cx="184.2" cy="297.3" rx="0.9" ry="1.3"/><ellipse cx="274.4" cy="294.1" rx="1.0" ry="1.4"/><ellipse cx="113.1" cy="282.5" rx="1.0" ry="1.5"/><ellipse cx="277.2" cy="294.9" rx="1.3" ry="2.5"/><ellipse cx="67.7" cy="286.6" rx="0.7" ry="1.5"/><ellipse cx="262.4" cy="291.8" rx="0.8" ry="1.1"/><ellipse cx="280.7" cy="287.3" rx="1.1" ry="1.8"/><ellipse cx="276.6" cy="281.1" rx="0.9" ry="1.4"/><ellipse cx="142.6" cy="287.8" rx="1.2" ry="1.7"/><ellipse cx="81.1" cy="284.9" rx="1.1" ry="1.6"/><ellipse cx="135.1" cy="272.3" rx="0.7" ry="1.2"/><ellipse cx="244.8" cy="288.5" rx="0.8" ry="1.1"/><ellipse cx="311.5" cy="285.6" rx="0.9" ry="1.8"/><ellipse cx="257.3" cy="285.2" rx="0.7" ry="1.5"/><ellipse cx="120.1" cy="271.2" rx="0.9" ry="1.6"/><ellipse cx="230.7" cy="276.8" rx="1.1" ry="1.9"/><ellipse cx="106.3" cy="295.2" rx="1.2" ry="2.4"/><ellipse cx="244.4" cy="278.1" rx="1.2" ry="2.4"/><ellipse cx="205.4" cy="298.0" rx="1.3" ry="2.1"/><ellipse cx="314.5" cy="299.7" rx="1.2" ry="1.5"/><ellipse cx="157.0" cy="287.5" rx="1.1" ry="2.0"/><ellipse cx="235.7" cy="276.4" rx="1.3" ry="2.2"/><ellipse cx="298.4" cy="277.8" rx="1.3" ry="2.3"/><ellipse cx="270.1" cy="291.1" rx="1.2" ry="2.0"/><ellipse cx="85.1" cy="282.5" rx="0.8" ry="1.4"/><ellipse cx="280.6" cy="281.6" rx="0.8" ry="1.0"/><ellipse cx="175.9" cy="286.6" rx="0.7" ry="1.3"/><ellipse cx="119.3" cy="274.5" rx="1.3" ry="2.2"/><ellipse cx="302.0" cy="285.0" rx="0.8" ry="1.2"/><ellipse cx="176.3" cy="288.2" rx="1.2" ry="2.2"/><ellipse cx="236.8" cy="279.0" rx="1.0" ry="1.5"/><ellipse cx="193.7" cy="279.4" rx="1.0" ry="1.7"/><ellipse cx="72.5" cy="294.1" rx="1.1" ry="2.0"/><ellipse cx="259.7" cy="290.9" rx="1.3" ry="2.1"/><ellipse cx="168.1" cy="267.6" rx="1.1" ry="1.9"/><ellipse cx="216.9" cy="306.4" rx="0.8" ry="1.2"/><ellipse cx="259.0" cy="293.7" rx="1.0" ry="1.3"/><ellipse cx="161.9" cy="294.2" rx="1.0" ry="1.7"/><ellipse cx="167.0" cy="287.9" rx="1.1" ry="2.0"/><ellipse cx="294.0" cy="291.5" rx="0.9" ry="1.4"/><ellipse cx="271.8" cy="293.0" rx="1.3" ry="1.8"/><ellipse cx="289.3" cy="297.1" rx="0.7" ry="1.2"/><ellipse cx="232.2" cy="275.9" rx="1.2" ry="1.8"/><ellipse cx="245.2" cy="280.1" rx="0.8" ry="1.2"/><ellipse cx="195.9" cy="290.3" rx="0.8" ry="1.5"/><ellipse cx="152.5" cy="288.4" rx="0.9" ry="1.3"/><ellipse cx="100.7" cy="272.2" rx="1.1" ry="1.8"/><ellipse cx="95.9" cy="296.6" rx="1.1" ry="1.4"/><ellipse cx="256.5" cy="287.0" rx="1.0" ry="1.6"/><ellipse cx="319.9" cy="281.9" rx="1.1" ry="2.0"/><ellipse cx="160.6" cy="281.3" rx="1.2" ry="2.1"/><ellipse cx="185.0" cy="285.0" rx="0.8" ry="1.6"/><ellipse cx="68.3" cy="288.3" rx="1.0" ry="1.4"/><ellipse cx="219.7" cy="286.7" rx="0.8" ry="1.3"/><ellipse cx="107.1" cy="293.2" rx="0.9" ry="1.4"/><ellipse cx="120.5" cy="271.7" rx="0.8" ry="1.2"/><ellipse cx="229.7" cy="295.1" rx="0.8" ry="1.2"/><ellipse cx="205.7" cy="274.8" rx="0.9" ry="1.8"/><ellipse cx="117.2" cy="289.9" rx="1.0" ry="1.4"/><ellipse cx="127.8" cy="287.1" rx="0.8" ry="1.1"/><ellipse cx="217.0" cy="293.9" rx="1.0" ry="1.9"/><ellipse cx="65.4" cy="280.3" rx="0.9" ry="1.8"/><ellipse cx="158.5" cy="292.7" rx="0.7" ry="1.2"/><ellipse cx="301.0" cy="292.2" rx="1.0" ry="1.5"/><ellipse cx="310.3" cy="273.3" rx="1.3" ry="2.5"/><ellipse cx="255.2" cy="285.4" rx="0.8" ry="1.3"/><circle cx="610.5" cy="303.5" r="0.9"/><circle cx="618.9" cy="289.4" r="0.8"/><circle cx="575.5" cy="296.0" r="1.2"/><circle cx="616.0" cy="292.4" r="0.8"/><circle cx="576.8" cy="303.6" r="1.0"/><circle cx="584.1" cy="297.0" r="1.3"/><circle cx="595.9" cy="304.4" r="1.1"/><circle cx="598.9" cy="300.9" r="0.9"/><circle cx="582.1" cy="299.5" r="0.8"/><circle cx="590.1" cy="293.3" r="1.3"/><circle cx="596.0" cy="293.6" r="0.6"/><circle cx="583.1" cy="310.5" r="0.9"/><circle cx="610.7" cy="294.2" r="1.1"/><circle cx="597.5" cy="305.8" r="1.0"/><circle cx="592.9" cy="295.2" r="1.1"/><circle cx="620.7" cy="304.4" r="1.0"/><circle cx="590.0" cy="311.6" r="1.3"/><circle cx="578.9" cy="304.1" r="1.2"/><circle cx="611.2" cy="316.0" r="1.3"/><circle cx="585.0" cy="320.2" r="0.9"/><circle cx="593.2" cy="317.1" r="0.7"/><circle cx="594.1" cy="302.7" r="0.8"/><circle cx="586.3" cy="307.7" r="1.1"/><circle cx="615.4" cy="307.5" r="1.3"/><circle cx="624.5" cy="308.7" r="1.4"/><circle cx="600.5" cy="304.7" r="1.0"/><circle cx="629.1" cy="303.4" r="0.9"/><circle cx="610.5" cy="295.5" r="0.7"/><circle cx="593.6" cy="292.1" r="0.6"/><circle cx="575.6" cy="298.7" r="1.2"/><circle cx="573.0" cy="302.9" r="0.7"/><circle cx="601.1" cy="295.5" r="1.0"/><circle cx="613.4" cy="297.8" r="0.9"/><circle cx="614.4" cy="291.5" r="0.9"/><circle cx="612.8" cy="309.2" r="1.4"/><circle cx="585.7" cy="302.6" r="0.9"/><circle cx="612.8" cy="309.6" r="0.7"/><circle cx="591.0" cy="314.0" r="0.9"/><circle cx="608.6" cy="308.5" r="0.8"/><circle cx="617.8" cy="286.2" r="0.9"/></g>
<!-- tall weed -->
<path d="M249,196 q3,8 4,16 q5,10 6,22 l2,60 l-5,0 l-1,-58 q-3,-14 -5,-24z" fill="#7c2206"/>
<path d="M64,300 Q66,240 76,198 Q71,250 70,300Z" fill="#7a1c06"/>
<path d="M466,217 q2,30 -2,70" fill="none" stroke="#7a1c06" stroke-width="1"/><ellipse cx="466.500" cy="216.500" rx="3.500" ry="1.300" fill="#7a1c06"/>
<g fill="#8a2606"><circle cx="262" cy="222" r="2.200"/><circle cx="265" cy="229" r="2.600"/><circle cx="261.500" cy="236" r="2.400"/><circle cx="267" cy="240" r="2"/><circle cx="270" cy="232" r="1.800"/><circle cx="266" cy="247" r="2.200"/></g>
<path d="M263,222 Q268,260 270,300" fill="none" stroke="#8a2606" stroke-width="1.200"/>
<!-- haze -->
<path d="M30,308 L120,305 L200,303 L300,300 L350,305 L385,320 L440,328 L500,322 L560,332 L600,338 L670,336 L670,390 L30,390Z" fill="url(#haze)" filter="url(#bl)"/>
<!-- boy -->
<path d="M348,160 C357,160 364,164 367,171.5 C369,178 369,186 366,192 C364,197 360,200 357.5,201 L359,206 C364,207 370,209 375,215 L390.5,247 L381,267 L376,269 L377,294 L379,348 L317.5,348 L318,298 L316,258 L316,237.5 L305,238.5 C302,238.5 298,237 296,235 L294,222.5 L280.5,220.7 C278,219.5 277.5,216.5 279,214.5 L305,192 C303,186 308,181.5 313.5,182 C319,182.5 323,187 321,192.5 L319,196 L299,210 L328.5,208 C332,208 336,207 338,206 L338,201 C333,198 329,192 329,182 C328,170 336,160 348,160Z" fill="url(#boy)"/>
<ellipse cx="372" cy="232" rx="14" ry="30" fill="#e8741c" opacity=".28" filter="url(#bl2)"/>
<!-- man -->
<circle cx="504.600" cy="194.600" r="2" fill="none" stroke="#8a2a08" stroke-width="1"/>
<path d="M537,170 C543,170 548,172 552,176 C562,182 568,192 569.5,204 C571,210 570,216 566,222 C563,224 558,226 550,226 L548,232 L564,243.5 C569,249 572,256 573,265 L571,294 L566,319 L564,348 L496,348 L498,312 L496.5,278 L494,273.5 L449,282.5 C444,283 439,279 439.5,275 C440,271 441,268 442,266.5 L483,218 C481,212 481,203 485,197 C489,191.5 498,191 503,195 C507,199 508,208 506,214 L499,222 L485,240 L490,235.5 L504,236 L512,240 L516.5,230 L522.5,227.5 L516,219 C514,218 512,215 513,211 L515.5,204 C514,200 516,196 520,192 L525,184 C524,176 528,170 537,170Z" fill="url(#man)"/>
<rect x="330" y="240" width="301" height="108" fill="url(#glow)"/>
<rect x="63" y="280" width="275" height="68" fill="url(#leftdark)" mask="url(#mb)"/>
<rect x="550" y="300" width="81" height="48" fill="url(#rightdark)"/>
<rect x="530" y="176" width="9" height="172" fill="url(#streak)" mask="url(#ms)"/>
<rect x="63" y="347" width="567" height="1" fill="#3a0404" opacity=".6"/></g>
</svg>
<!-- collapse handle -->
<div class="a" style="left:680.300px;top:154.500px;width:13px;height:79px;background:#b9b9b9"></div>
<svg class="a" style="left:684px;top:188px" width="10" height="13" viewBox="0 0 10 13"><path d="M2,2 L6.800,6.500 L2,11" fill="none" stroke="#444" stroke-width="2.200"/></svg>
<!-- panel -->
<div id="panel" class="a">
 <div id="phead" class="a"></div>
 <div class="t" id="adj" style="transform-origin:0 0;transform:scaleX(0.9393);left:121.500px;top:8.500px;font-size:11.300px;color:#7a7a7a">Adjust</div>
 <div class="a" style="left:276px;top:8.500px;width:10px;height:1.600px;background:#555"></div>
 <div class="a" style="left:276px;top:12.300px;width:10px;height:1.600px;background:#555"></div>
 <div class="a" style="left:276px;top:16.100px;width:10px;height:1.600px;background:#555"></div>
 <div class="t tab" id="tb1" style="transform-origin:0 0;transform:scaleX(0.8968);left:20px">Optimize</div>
 <div class="t tab" id="tb2" style="transform-origin:0 0;transform:scaleX(0.8731);left:99px">Color</div>
 <div class="t tab" id="tb3" style="transform-origin:0 0;transform:scaleX(0.8732);left:163px">Templates</div>
 <div class="t tab" id="tb4" style="transform-origin:0 0;transform:scaleX(0.8218);left:243px">Speed</div>
 <div class="a" style="left:73px;top:43.200px;width:72.500px;height:1.800px;background:#5a5a5a"></div>

 <div class="t lbl" id="l1" style="transform-origin:0 0;transform:scaleX(0.8231);top:65.300px">Brightness</div><div class="t val" style="top:66px">0</div>
 <div class="track" style="top:77px"></div><div class="knob" style="left:84.800px;top:74.400px"></div>
 <div class="t lbl" id="l2" style="transform-origin:0 0;transform:scaleX(0.8464);top:90.300px">Contrast</div><div class="t val" style="top:91px">65</div>
 <div class="track" style="top:102px"></div><div class="knob" style="left:105.500px;top:99.400px"></div>
 <div class="t lbl" id="l3" style="transform-origin:0 0;transform:scaleX(0.8691);top:115.300px">Saturation</div><div class="t val" style="top:116px">-11</div>
 <div class="track" style="top:127px"></div><div class="knob" style="left:77.500px;top:124.400px"></div>
 <div class="t lbl" id="l4" style="transform-origin:0 0;transform:scaleX(0.8652);top:140.300px">Backlight correction</div><div class="t val" style="top:141px">30</div>
 <div class="track" style="top:152px"></div><div class="knob" style="left:57.300px;top:149.400px"></div>
 <div class="a" style="left:90px;top:109px;width:1px;height:1.500px;background:#999"></div>
 <div class="a" style="left:90px;top:134.500px;width:1px;height:1.500px;background:#999"></div>
 <div class="a" style="left:21px;top:159px;width:1px;height:1.500px;background:#999"></div>

 <div class="t lbl" id="l5" style="transform-origin:0 0;transform:scaleX(0.8777);left:203.300px;top:65.300px">Auto correction:</div>
 <!-- color auto icon -->
 <svg class="a" style="left:204.500px;top:83.500px" width="14" height="13" viewBox="0 0 14 13">
  <g stroke="#444" stroke-width="1" stroke-linecap="round"><path d="M6,1V2.500M2.200,2.200L3.300,3.300M1,6H2.500M2.200,9.800L3.300,8.700M9.800,2.200L8.700,3.300"/></g>
  <path d="M6,3.200a2.800,2.800 0 0 0 0,5.600z" fill="#444"/><path d="M6,3.200V1" stroke="#444" stroke-width="1.600"/>
  <path d="M6,1.500c1.500,1.500 1.800,3.500 0,6.500" fill="#444"/>
  <circle cx="9.700" cy="8.900" r="3.100" fill="#444"/><circle cx="9.700" cy="8.900" r="1.200" fill="#e6e6e6"/>
 </svg>
 <div class="t" id="ac1" style="transform-origin:0 0;transform:scaleX(0.8923);left:224.800px;top:87.500px;font-size:6.800px;color:#5c5c5c">Color</div>
 <!-- exposure icon -->
 <svg class="a" style="left:206px;top:105.400px" width="11" height="11" viewBox="0 0 11 11">
  <circle cx="5.500" cy="5.500" r="2.600" fill="#444"/>
  <g stroke="#444" stroke-width="1.300" stroke-linecap="round"><path d="M5.500,.6V1.700M5.500,9.300V10.400M.6,5.500H1.700M9.300,5.500H10.400M2,2L2.800,2.800M8.200,8.200L9,9M2,9L2.800,8.200M8.200,2.800L9,2"/></g>
 </svg>
 <div class="t" id="ac2" style="transform-origin:0 0;transform:scaleX(0.9471);left:224.800px;top:108.400px;font-size:6.800px;color:#5c5c5c">Exposure</div>

 <div class="t lbl" id="l6" style="transform-origin:0 0;transform:scaleX(0.8823);top:180.800px;font-size:7.800px">Hue</div>
 <!-- hue wheel -->
 <div class="a" style="left:81px;top:179.800px;width:142.600px;height:142.600px;border-radius:50%;background:radial-gradient(circle closest-side,#fff 0,rgba(255,255,255,.97) 8%,rgba(255,255,255,.76) 30%,rgba(255,255,255,.46) 55%,rgba(255,255,255,.17) 82%,rgba(255,255,255,0) 100%),conic-gradient(#f00,#f0f,#00f,#0ff,#0f0,#ff0,#f00)"></div>
 <svg class="a" style="left:140px;top:228px" width="40" height="40" viewBox="833 257 40 40"><path d="M845,281L852.800,272.400" stroke="#6a4a5a" stroke-width="1"/><circle cx="856.300" cy="268.500" r="4.700" fill="none" stroke="#7a5070" stroke-width="1"/></svg>
</div>
<!-- panel pointer -->
<svg class="a" style="left:985.500px;top:171.500px" width="6" height="11" viewBox="0 0 6 11"><path d="M0,0L5.200,5.300L0,10.600z" fill="#fff"/></svg>
<!-- right toolbar -->
<div class="t" id="icT" style="transform-origin:0 0;transform:scaleX(0.9239);left:997.700px;top:126.500px;font-family:'Liberation Serif',serif;font-weight:bold;font-size:24.500px;color:#4a4a4a">T</div>
<div class="t" id="icfx" style="transform-origin:0 0;transform:scaleX(1.1258);left:997px;top:167.200px;font-family:'Liberation Serif',serif;font-style:italic;font-weight:bold;font-size:17.600px;color:#4a4a4a">fx</div>
<svg class="a" style="left:996px;top:210px" width="18" height="17" viewBox="0 0 18 17"><path d="M1,5.500H4.500L9.500,1.500V15.300L4.500,11.300H1z" fill="#4a4a4a"/><path d="M11.500,5.300a4,4 0 0 1 0,6.200M13.200,2.600a7.200,7.200 0 0 1 0,11.600" fill="none" stroke="#4a4a4a" stroke-width="1.700"/></svg>
<svg class="a" style="left:998.300px;top:253px" width="13.200" height="12.800" viewBox="0 0 13.200 12.800"><rect x=".8" y=".8" width="11.600" height="11.200" fill="#e2e2e2" stroke="#4a4a4a" stroke-width="1.600"/><path d="M.8,.8H12.400L.8,12z" fill="#4a4a4a"/></svg>

<!-- time ruler -->
<div class="a" style="left:39.8px;top:356.8px;width:1px;height:7.2px;background:#6e6e6e"></div><div class="t rl" style="left:42.9px">00:00:00</div><div class="a" style="left:46.5px;top:362.3px;width:1px;height:1.7px;background:#a6a6a6"></div><div class="a" style="left:53.2px;top:362.3px;width:1px;height:1.7px;background:#a6a6a6"></div><div class="a" style="left:59.9px;top:362.3px;width:1px;height:1.7px;background:#a6a6a6"></div><div class="a" style="left:66.7px;top:362.3px;width:1px;height:1.7px;background:#a6a6a6"></div><div class="a" style="left:73.4px;top:362.3px;width:1px;height:1.7px;background:#a6a6a6"></div><div class="a" style="left:80.1px;top:356.8px;width:1px;height:7.2px;background:#6e6e6e"></div><div class="t rl" style="left:83.2px">00:01:00</div><div class="a" style="left:86.8px;top:362.3px;width:1px;height:1.7px;background:#a6a6a6"></div><div class="a" style="left:93.5px;top:362.3px;width:1px;height:1.7px;background:#a6a6a6"></div><div class="a" style="left:100.2px;top:362.3px;width:1px;height:1.7px;background:#a6a6a6"></div><div class="a" style="left:107.0px;top:362.3px;width:1px;height:1.7px;background:#a6a6a6"></div><div class="a" style="left:113.7px;top:362.3px;width:1px;height:1.7px;background:#a6a6a6"></div><div class="a" style="left:120.4px;top:356.8px;width:1px;height:7.2px;background:#6e6e6e"></div><div class="t rl" style="left:123.5px">00:02:00</div><div class="a" style="left:127.1px;top:362.3px;width:1px;height:1.7px;background:#a6a6a6"></div><div class="a" style="left:133.8px;top:362.3px;width:1px;height:1.7px;background:#a6a6a6"></div><div class="a" style="left:140.5px;top:362.3px;width:1px;height:1.7px;background:#a6a6a6"></div><div class="a" style="left:147.3px;top:362.3px;width:1px;height:1.7px;background:#a6a6a6"></div><div class="a" style="left:154.0px;top:362.3px;width:1px;height:1.7px;background:#a6a6a6"></div><div class="a" style="left:160.7px;top:356.8px;width:1px;height:7.2px;background:#6e6e6e"></div><div class="t rl" style="left:163.8px">00:03:00</div><div class="a" style="left:167.4px;top:362.3px;width:1px;height:1.7px;background:#a6a6a6"></div><div class="a" style="left:174.1px;top:362.3px;width:1px;height:1.7px;background:#a6a6a6"></div><div class="a" style="left:180.8px;top:362.3px;width:1px;height:1.7px;background:#a6a6a6"></div><div class="a" style="left:187.6px;top:362.3px;width:1px;height:1.7px;background:#a6a6a6"></div><div class="a" style="left:194.3px;top:362.3px;width:1px;height:1.7px;background:#a6a6a6"></div><div class="a" style="left:201.0px;top:356.8px;width:1px;height:7.2px;background:#6e6e6e"></div><div class="t rl" style="left:204.1px">00:04:00</div><div class="a" style="left:207.7px;top:362.3px;width:1px;height:1.7px;background:#a6a6a6"></div><div class="a" style="left:214.4px;top:362.3px;width:1px;height:1.7px;background:#a6a6a6"></div><div class="a" style="left:221.2px;top:362.3px;width:1px;height:1.7px;background:#a6a6a6"></div><div class="a" style="left:227.9px;top:362.3px;width:1px;height:1.7px;background:#a6a6a6"></div><div class="a" style="left:234.6px;top:362.3px;width:1px;height:1.7px;background:#a6a6a6"></div><div class="a" style="left:241.3px;top:356.8px;width:1px;height:7.2px;background:#6e6e6e"></div><div class="t rl" style="left:244.4px">00:05:00</div><div class="a" style="left:248.0px;top:362.3px;width:1px;height:1.7px;background:#a6a6a6"></div><div class="a" style="left:254.7px;top:362.3px;width:1px;height:1.7px;background:#a6a6a6"></div><div class="a" style="left:261.4px;top:362.3px;width:1px;height:1.7px;background:#a6a6a6"></div><div class="a" style="left:268.2px;top:362.3px;width:1px;height:1.7px;background:#a6a6a6"></div><div class="a" style="left:274.9px;top:362.3px;width:1px;height:1.7px;background:#a6a6a6"></div><div class="a" style="left:281.6px;top:356.8px;width:1px;height:7.2px;background:#6e6e6e"></div><div class="t rl" style="left:284.7px">00:06:00</div><div class="a" style="left:288.3px;top:362.3px;width:1px;height:1.7px;background:#a6a6a6"></div><div class="a" style="left:295.0px;top:362.3px;width:1px;height:1.7px;background:#a6a6a6"></div><div class="a" style="left:301.7px;top:362.3px;width:1px;height:1.7px;background:#a6a6a6"></div><div class="a" style="left:308.5px;top:362.3px;width:1px;height:1.7px;background:#a6a6a6"></div><div class="a" style="left:315.2px;top:362.3px;width:1px;height:1.7px;background:#a6a6a6"></div><div class="a" style="left:321.9px;top:356.8px;width:1px;height:7.2px;background:#6e6e6e"></div><div class="t rl" style="left:325.0px">00:07:00</div><div class="a" style="left:328.6px;top:362.3px;width:1px;height:1.7px;background:#a6a6a6"></div><div class="a" style="left:335.3px;top:362.3px;width:1px;height:1.7px;background:#a6a6a6"></div><div class="a" style="left:342.0px;top:362.3px;width:1px;height:1.7px;background:#a6a6a6"></div><div class="a" style="left:348.8px;top:362.3px;width:1px;height:1.7px;background:#a6a6a6"></div><div class="a" style="left:355.5px;top:362.3px;width:1px;height:1.7px;background:#a6a6a6"></div><div class="a" style="left:362.2px;top:356.8px;width:1px;height:7.2px;background:#6e6e6e"></div><div class="t rl" style="left:365.3px">00:08:00</div><div class="a" style="left:368.9px;top:362.3px;width:1px;height:1.7px;background:#a6a6a6"></div><div class="a" style="left:375.6px;top:362.3px;width:1px;height:1.7px;background:#a6a6a6"></div><div class="a" style="left:382.3px;top:362.3px;width:1px;height:1.7px;background:#a6a6a6"></div><div class="a" style="left:389.1px;top:362.3px;width:1px;height:1.7px;background:#a6a6a6"></div><div class="a" style="left:395.8px;top:362.3px;width:1px;height:1.7px;background:#a6a6a6"></div><div class="a" style="left:402.5px;top:356.8px;width:1px;height:7.2px;background:#6e6e6e"></div><div class="t rl" style="left:405.6px">00:09:00</div><div class="a" style="left:409.2px;top:362.3px;width:1px;height:1.7px;background:#a6a6a6"></div><div class="a" style="left:415.9px;top:362.3px;width:1px;height:1.7px;background:#a6a6a6"></div><div class="a" style="left:422.6px;top:362.3px;width:1px;height:1.7px;background:#a6a6a6"></div><div class="a" style="left:429.4px;top:362.3px;width:1px;height:1.7px;background:#a6a6a6"></div><div class="a" style="left:436.1px;top:362.3px;width:1px;height:1.7px;background:#a6a6a6"></div><div class="a" style="left:442.8px;top:356.8px;width:1px;height:7.2px;background:#6e6e6e"></div><div class="t rl" style="left:445.9px">00:10:00</div><div class="a" style="left:449.5px;top:362.3px;width:1px;height:1.7px;background:#a6a6a6"></div><div class="a" style="left:456.2px;top:362.3px;width:1px;height:1.7px;background:#a6a6a6"></div><div class="a" style="left:462.9px;top:362.3px;width:1px;height:1.7px;background:#a6a6a6"></div><div class="a" style="left:469.7px;top:362.3px;width:1px;height:1.7px;background:#a6a6a6"></div><div class="a" style="left:476.4px;top:362.3px;width:1px;height:1.7px;background:#a6a6a6"></div><div class="a" style="left:483.1px;top:356.8px;width:1px;height:7.2px;background:#6e6e6e"></div><div class="t rl" style="left:486.2px">00:11:00</div><div class="a" style="left:489.8px;top:362.3px;width:1px;height:1.7px;background:#a6a6a6"></div><div class="a" style="left:496.5px;top:362.3px;width:1px;height:1.7px;background:#a6a6a6"></div><div class="a" style="left:503.2px;top:362.3px;width:1px;height:1.7px;background:#a6a6a6"></div><div class="a" style="left:510.0px;top:362.3px;width:1px;height:1.7px;background:#a6a6a6"></div><div class="a" style="left:516.7px;top:362.3px;width:1px;height:1.7px;background:#a6a6a6"></div><div class="a" style="left:523.4px;top:356.8px;width:1px;height:7.2px;background:#6e6e6e"></div><div class="t rl" style="left:526.5px">00:12:00</div><div class="a" style="left:530.1px;top:362.3px;width:1px;height:1.7px;background:#a6a6a6"></div><div class="a" style="left:536.8px;top:362.3px;width:1px;height:1.7px;background:#a6a6a6"></div><div class="a" style="left:543.5px;top:362.3px;width:1px;height:1.7px;background:#a6a6a6"></div><div class="a" style="left:550.3px;top:362.3px;width:1px;height:1.7px;background:#a6a6a6"></div><div class="a" style="left:557.0px;top:362.3px;width:1px;height:1.7px;background:#a6a6a6"></div><div class="a" style="left:563.7px;top:356.8px;width:1px;height:7.2px;background:#6e6e6e"></div><div class="t rl" style="left:566.8px">00:13:00</div><div class="a" style="left:570.4px;top:362.3px;width:1px;height:1.7px;background:#a6a6a6"></div><div class="a" style="left:577.1px;top:362.3px;width:1px;height:1.7px;background:#a6a6a6"></div><div class="a" style="left:583.8px;top:362.3px;width:1px;height:1.7px;background:#a6a6a6"></div><div class="a" style="left:590.6px;top:362.3px;width:1px;height:1.7px;background:#a6a6a6"></div><div class="a" style="left:597.3px;top:362.3px;width:1px;height:1.7px;background:#a6a6a6"></div><div class="a" style="left:604.0px;top:356.8px;width:1px;height:7.2px;background:#6e6e6e"></div><div class="t rl" style="left:607.1px">00:14:00</div><div class="a" style="left:610.7px;top:362.3px;width:1px;height:1.7px;background:#a6a6a6"></div><div class="a" style="left:617.4px;top:362.3px;width:1px;height:1.7px;background:#a6a6a6"></div><div class="a" style="left:624.1px;top:362.3px;width:1px;height:1.7px;background:#a6a6a6"></div><div class="a" style="left:630.9px;top:362.3px;width:1px;height:1.7px;background:#a6a6a6"></div><div class="a" style="left:637.6px;top:362.3px;width:1px;height:1.7px;background:#a6a6a6"></div><div class="a" style="left:644.3px;top:356.8px;width:1px;height:7.2px;background:#6e6e6e"></div>
<!-- lightning -->
<svg class="a" style="left:6.500px;top:360px" width="10" height="17.500" viewBox="0 0 10 17.500"><path d="M4.200,.3H9L6.200,6.200H9.600L1.800,17.200L3.800,9.300H.5z" fill="#4a4a4a"/></svg>
<div class="a" style="left:39.500px;top:365.600px;width:612px;height:12.400px;background:#f9a03c"></div>
<div class="a" style="left:23.200px;top:365.600px;width:16.300px;height:12.400px;background:#4f4f4f"></div>
<div class="a" style="left:651.500px;top:365.600px;width:16.500px;height:12.400px;background:#4f4f4f"></div>
<div class="a" style="left:27.400px;top:368px;width:8.500px;height:7.500px;background:repeating-linear-gradient(90deg,#bdbdbd 0,#bdbdbd 1.100px,transparent 1.100px,transparent 2.450px)"></div>
<div class="a" style="left:655.800px;top:368px;width:8.500px;height:7.500px;background:repeating-linear-gradient(90deg,#bdbdbd 0,#bdbdbd 1.100px,transparent 1.100px,transparent 2.450px)"></div>
<div class="t" id="tc" style="transform-origin:0 0;transform:scaleX(1.0517);left:333px;top:368.700px;font-size:6.600px;color:#7d4a12">00:15:04</div>
<svg class="a" style="left:132px;top:352px" width="10.400" height="13.500" viewBox="0 0 10.400 13.500"><path d="M.2,0H10.200V8L5.200,13.300L.2,8z" fill="#505050"/></svg>
<!-- fullscreen icon -->
<svg class="a" style="left:675px;top:360.700px" width="15.600" height="15.800" viewBox="0 0 15.600 15.800"><rect x=".8" y=".8" width="14" height="14.200" fill="none" stroke="#4a4a4a" stroke-width="1.600"/><path d="M8.300,4H11.700V7.400M7.300,11.800H3.900V8.400" fill="none" stroke="#4a4a4a" stroke-width="1.600"/></svg>

<!-- transport -->
<div id="transport" class="a"></div>

<svg class="a" style="left:0;top:386px" width="60" height="24" viewBox="0 386 60 24"><path d="M6.400,391.900L4.400,401.800L13.800,399.800z" fill="#4a4a4a"/><path d="M9.500,396.800C12,393.100 17,392.500 19.500,395.500C21.500,398 21.300,401.500 19.700,404.300" fill="none" stroke="#4a4a4a" stroke-width="2.400"/>
<g transform="translate(56.200 0) scale(-1 1)"><path d="M6.400,391.900L4.400,401.800L13.800,399.800z" fill="#cbcbcb"/><path d="M9.500,396.800C12,393.100 17,392.500 19.500,395.500C21.500,398 21.300,401.500 19.700,404.300" fill="none" stroke="#cbcbcb" stroke-width="2.400"/></g></svg>
<svg class="a" style="left:157px;top:392px" width="12" height="11" viewBox="157 392 12 11"><rect x="157.900" y="392.500" width="2" height="10.200" fill="#4a4a4a"/><path d="M168.100,392.500V402.700L159.900,397.600z" fill="#4a4a4a"/></svg>
<svg class="a" style="left:184px;top:392px" width="18" height="11" viewBox="184 392 18 11"><path d="M193.500,392.900V402.300L184.700,397.600zM201.500,392.900V402.300L192.700,397.600z" fill="#4a4a4a"/></svg>
<svg class="a" style="left:216px;top:388px" width="14" height="18" viewBox="216 388 14 18"><path d="M216.200,389V405.600L229.400,397.300z" fill="#4a4a4a"/></svg>
<svg class="a" style="left:244px;top:392px" width="18" height="11" viewBox="244 392 18 11"><path d="M244.300,392.900V402.300L253.100,397.600zM252.300,392.900V402.300L261.100,397.600z" fill="#4a4a4a"/></svg>
<!-- scissors with x -->
<svg class="a" style="left:363px;top:388px" width="20" height="19" viewBox="363 388 20 19"><g fill="none" stroke="#4a4a4a" stroke-width="1.850" stroke-linecap="round">
<path d="M365.200,390L369.200,394.200M369.200,390L365.200,394.200" stroke-width="1.500"/>
<path d="M364.900,395.800C365.300,398.600 369.500,399.300 371,397.200"/>
<circle cx="375" cy="403" r="2.400"/>
<path d="M375,400.500L377.200,390"/><path d="M371.300,397.500L374.500,399.500"/><path d="M376.500,396.200L380.900,393.300"/>
</g></svg>
<!-- scissors -->
<svg class="a" style="left:393px;top:388px" width="20" height="19" viewBox="393 388 20 19"><g fill="none" stroke="#4a4a4a" stroke-width="1.850" stroke-linecap="round">
<circle cx="397.500" cy="396.100" r="2.400"/><circle cx="404.300" cy="403" r="2.400"/>
<path d="M404.300,400.500L406.500,390"/><path d="M399.800,397L403.800,399.500"/><path d="M405.800,396.200L410.500,393.300"/>
</g></svg>
<svg class="a" style="left:425px;top:390px" width="15" height="15" viewBox="425 390 15 15"><path d="M426.700,391.600L438.400,403.300M438.400,391.600L426.700,403.300" stroke="#4a4a4a" stroke-width="1.600" fill="none"/></svg>
<div class="t" id="tcode" style="transform-origin:0 0;transform:scaleX(0.9453);left:637.600px;top:390.050px;font-size:16.200px;color:#5a5a5a">00:09</div>
<div class="t" id="tcode2" style="transform-origin:0 0;transform:scaleX(0.8287);left:678px;top:391.800px;font-size:9px;color:#5a5a5a">12</div>
<!-- add video -->
<svg class="a" style="left:812px;top:386px" width="24" height="22" viewBox="812 386 24 22">
<rect x="819.200" y="392.200" width="15.300" height="14" fill="#4a4a4a"/>
<g fill="#fff"><rect x="827.300" y="393.500" width="2" height="2"/><rect x="830.800" y="393.500" width="2" height="2"/><rect x="820.800" y="402.800" width="2" height="2"/><rect x="824.200" y="402.800" width="2" height="2"/><rect x="827.600" y="402.800" width="2" height="2"/><rect x="831" y="402.800" width="2" height="2"/></g>
<circle cx="819.500" cy="393.200" r="7" fill="#fff"/><circle cx="819.500" cy="393.200" r="5.900" fill="#4a4a4a"/><path d="M816.300,393.200H822.700M819.500,390V396.400" stroke="#fff" stroke-width="1.700"/></svg>
<!-- add image -->
<svg class="a" style="left:844px;top:386px" width="24" height="22" viewBox="844 386 24 22">
<rect x="849.700" y="392.900" width="16.300" height="12.600" fill="#fff" stroke="#4a4a4a" stroke-width="1.400"/>
<path d="M852,403.500L855.500,399.500L857.500,401.500L861,397.500L864.500,403.500z" fill="#4a4a4a"/>
<circle cx="851.400" cy="393.200" r="7" fill="#fff"/><circle cx="851.400" cy="393.200" r="5.900" fill="#4a4a4a"/><path d="M848.200,393.200H854.600M851.400,390V396.400" stroke="#fff" stroke-width="1.700"/></svg>
<!-- add music -->
<svg class="a" style="left:876px;top:386px" width="24" height="22" viewBox="876 386 24 22">
<path d="M887,392.300L897,389V401" fill="none" stroke="#4a4a4a" stroke-width="1.800"/><path d="M887,393.200L897,389.900" fill="none" stroke="#4a4a4a" stroke-width="2.800"/><path d="M887.900,392V404" stroke="#4a4a4a" stroke-width="1.800"/>
<ellipse cx="885.300" cy="404" rx="3.200" ry="2.300" transform="rotate(-25 885.300 404)" fill="#4a4a4a"/><ellipse cx="894.300" cy="401" rx="3.200" ry="2.300" transform="rotate(-25 894.300 401)" fill="#4a4a4a"/>
<circle cx="883.100" cy="393.200" r="7" fill="#fff"/><circle cx="883.100" cy="393.200" r="5.900" fill="#4a4a4a"/><path d="M879.900,393.200H886.300M883.100,390V396.400" stroke="#fff" stroke-width="1.700"/></svg>
<!-- finish -->
<div class="a" style="left:906.700px;top:384px;width:111.700px;height:26.600px;border-radius:2.500px;background:#f9a03c"></div>
<svg class="a" style="left:911px;top:389px" width="15" height="17" viewBox="911 389 15 17"><path d="M918.500,389.500L923.500,395.600H919.600V402.200H917.400V395.600H913.500z" fill="#474a55"/><rect x="911.900" y="403.900" width="13.300" height="1.700" fill="#474a55"/></svg>
<div class="t" id="fin" style="transform-origin:0 0;transform:scaleX(0.9990);left:932.700px;top:393px;font-size:8.600px;color:#7d4e1c">Finish movie</div>

<!-- storyboard -->
<div id="story" class="a"></div>
<div id="audio" class="a"></div>
<div id="status" class="a"></div>
<svg class="a" style="left:10px;top:460px" width="9" height="12" viewBox="0 0 9 12"><path d="M7,1.500L2,6L7,10.500" fill="none" stroke="#b9b9b9" stroke-width="1.800"/></svg><svg class="a" style="left:1008px;top:460px" width="9" height="12" viewBox="0 0 9 12"><path d="M2,1.500L7,6L2,10.500" fill="none" stroke="#a9a9a9" stroke-width="1.800"/></svg><div class="tr" style="left:33.8px"></div><div class="card" style="left:50.5px"><div class="cb"></div><svg class="a" style="left:54.500px;top:4px" width="6.400" height="6" viewBox="0 0 6.400 6"><path d="M.6,.5L5.800,5.500M5.800,.5L.6,5.500" stroke="#333" stroke-width="1.150" fill="none"/></svg><svg class="a" style="left:2.300px;top:18.600px" width="59.300" height="33.400" viewBox="63 30 567 318" preserveAspectRatio="none"><use href="#scene"/></svg><div class="a" style="left:2.300px;top:18.600px;width:59.300px;height:33.400px;background:linear-gradient(rgba(120,60,0,.10) 0,rgba(90,40,0,.10) 55%,rgba(40,8,0,.38) 80%,rgba(30,4,0,.5) 100%)"></div><div class="a" style="left:19.500px;top:22.800px;width:11.500px;height:11.500px;border-radius:50%;background:radial-gradient(circle,rgba(200,205,240,.55) 0,rgba(200,205,240,.45) 60%,rgba(200,205,240,0) 100%)"></div></div><div class="tr" style="left:118.8px"></div><div class="card" style="left:135.5px"><div class="cb"></div><svg class="a" style="left:54.500px;top:4px" width="6.400" height="6" viewBox="0 0 6.400 6"><path d="M.6,.5L5.800,5.500M5.800,.5L.6,5.500" stroke="#333" stroke-width="1.150" fill="none"/></svg><svg class="a" style="left:2.300px;top:18.600px" width="59.300" height="33.400" viewBox="63 30 567 318" preserveAspectRatio="none"><use href="#scene"/></svg><div class="a" style="left:2.300px;top:18.600px;width:59.300px;height:33.400px;background:linear-gradient(rgba(120,60,0,.10) 0,rgba(90,40,0,.10) 55%,rgba(40,8,0,.38) 80%,rgba(30,4,0,.5) 100%)"></div><div class="a" style="left:19.500px;top:22.800px;width:11.500px;height:11.500px;border-radius:50%;background:radial-gradient(circle,rgba(200,205,240,.55) 0,rgba(200,205,240,.45) 60%,rgba(200,205,240,0) 100%)"></div></div><div class="tr" style="left:203.6px"></div><div class="card" style="left:220.3px"><div class="cb"></div><svg class="a" style="left:54.500px;top:4px" width="6.400" height="6" viewBox="0 0 6.400 6"><path d="M.6,.5L5.800,5.500M5.800,.5L.6,5.500" stroke="#333" stroke-width="1.150" fill="none"/></svg><svg class="a" style="left:2.300px;top:18.600px" width="59.300" height="33.400" viewBox="63 30 567 318" preserveAspectRatio="none"><use href="#scene"/></svg><div class="a" style="left:2.300px;top:18.600px;width:59.300px;height:33.400px;background:linear-gradient(rgba(120,60,0,.10) 0,rgba(90,40,0,.10) 55%,rgba(40,8,0,.38) 80%,rgba(30,4,0,.5) 100%)"></div><div class="a" style="left:19.500px;top:22.800px;width:11.500px;height:11.500px;border-radius:50%;background:radial-gradient(circle,rgba(200,205,240,.55) 0,rgba(200,205,240,.45) 60%,rgba(200,205,240,0) 100%)"></div></div><div class="tr" style="left:288.3px"></div><div class="card sel" style="left:305px"><div class="cb"></div><svg class="a" style="left:3.500px;top:3.700px" width="6.300" height="6.300" viewBox="0 0 6.300 6.300"><path d="M1,3.600L2.500,5L5.300,1" fill="none" stroke="#222" stroke-width="1.200"/></svg><svg class="a" style="left:54.500px;top:4px" width="6.400" height="6" viewBox="0 0 6.400 6"><path d="M.6,.5L5.800,5.500M5.800,.5L.6,5.500" stroke="#3a4a5a" stroke-width="1.150" fill="none"/></svg><svg class="a" style="left:2.300px;top:18.600px" width="59.300" height="33.400" viewBox="63 30 567 318" preserveAspectRatio="none"><use href="#scene"/></svg><div class="a" style="left:2.300px;top:18.600px;width:59.300px;height:33.400px;background:linear-gradient(rgba(120,60,0,.10) 0,rgba(90,40,0,.10) 55%,rgba(40,8,0,.38) 80%,rgba(30,4,0,.5) 100%)"></div><div class="a" style="left:19.500px;top:22.800px;width:11.500px;height:11.500px;border-radius:50%;background:radial-gradient(circle,rgba(200,205,240,.55) 0,rgba(200,205,240,.45) 60%,rgba(200,205,240,0) 100%)"></div></div><div class="tr" style="left:373.5px"></div><div class="card" style="left:390.2px"><div class="cb"></div><svg class="a" style="left:54.500px;top:4px" width="6.400" height="6" viewBox="0 0 6.400 6"><path d="M.6,.5L5.800,5.500M5.800,.5L.6,5.500" stroke="#333" stroke-width="1.150" fill="none"/></svg><svg class="a" style="left:2.300px;top:18.600px" width="59.300" height="33.400" viewBox="63 30 567 318" preserveAspectRatio="none"><use href="#scene"/></svg><div class="a" style="left:2.300px;top:18.600px;width:59.300px;height:33.400px;background:linear-gradient(rgba(120,60,0,.10) 0,rgba(90,40,0,.10) 55%,rgba(40,8,0,.38) 80%,rgba(30,4,0,.5) 100%)"></div><div class="a" style="left:19.500px;top:22.800px;width:11.500px;height:11.500px;border-radius:50%;background:radial-gradient(circle,rgba(200,205,240,.55) 0,rgba(200,205,240,.45) 60%,rgba(200,205,240,0) 100%)"></div></div><div class="tr" style="left:458.3px"></div><div class="card" style="left:475px"><div class="cb"></div><svg class="a" style="left:54.500px;top:4px" width="6.400" height="6" viewBox="0 0 6.400 6"><path d="M.6,.5L5.800,5.500M5.800,.5L.6,5.500" stroke="#333" stroke-width="1.150" fill="none"/></svg><svg class="a" style="left:2.300px;top:18.600px" width="59.300" height="33.400" viewBox="63 30 567 318" preserveAspectRatio="none"><use href="#scene"/></svg><div class="a" style="left:2.300px;top:18.600px;width:59.300px;height:33.400px;background:linear-gradient(rgba(120,60,0,.10) 0,rgba(90,40,0,.10) 55%,rgba(40,8,0,.38) 80%,rgba(30,4,0,.5) 100%)"></div><div class="a" style="left:19.500px;top:22.800px;width:11.500px;height:11.500px;border-radius:50%;background:radial-gradient(circle,rgba(200,205,240,.55) 0,rgba(200,205,240,.45) 60%,rgba(200,205,240,0) 100%)"></div></div><div class="tr" style="left:543.3px"></div><svg class="a" style="left:303.400px;top:420.700px" width="10.400" height="13" viewBox="0 0 10.400 13"><path d="M.2,0H10.200V8L5.200,12.800L.2,8z" fill="#505050"/></svg><div class="a" style="left:308px;top:433px;width:1px;height:103px;background:#e2552c"></div><svg class="a" style="left:9.500px;top:503px" width="11" height="11" viewBox="0 0 11 11"><path d="M3.600,2.300L9.500,.6V7.300" fill="none" stroke="#3c3c3c" stroke-width="1.300"/><path d="M3.600,2V8.800" stroke="#3c3c3c" stroke-width="1.300"/><path d="M3.600,3.600L9.500,1.900" stroke="#3c3c3c" stroke-width="1.500"/><ellipse cx="2.300" cy="9" rx="2" ry="1.400" transform="rotate(-20 2.300 9)" fill="#3c3c3c"/><ellipse cx="8.200" cy="7.500" rx="2" ry="1.400" transform="rotate(-20 8.200 7.500)" fill="#3c3c3c"/></svg><svg class="a" style="left:11.500px;top:521px" width="9" height="11.500" viewBox="0 0 9 11.500"><rect x="2.900" y=".3" width="3.200" height="6.400" rx="1.600" fill="#3c3c3c"/><path d="M1.200,4.300V5.200a3.300,3.300 0 0 0 6.600,0V4.300" fill="none" stroke="#3c3c3c" stroke-width="1"/><path d="M4.500,8.500V10.500M2.500,10.700H6.500" stroke="#3c3c3c" stroke-width="1"/></svg><div class="a" style="left:31px;top:538px;width:964.500px;height:3.800px;background:#b4b4b4"></div><div class="a" style="left:8.5px;top:547.600px;width:2.400px;height:2.400px;border-radius:50%;background:#e3e3e3"></div><div class="a" style="left:12.4px;top:547.600px;width:2.400px;height:2.400px;border-radius:50%;background:#e3e3e3"></div><div class="a" style="left:16.3px;top:547.600px;width:2.400px;height:2.400px;border-radius:50%;background:#e3e3e3"></div><div class="a" style="left:20.2px;top:547.600px;width:2.400px;height:2.400px;border-radius:50%;background:#e3e3e3"></div><div class="t" id="s1" style="transform-origin:0 0;transform:scaleX(1.0127);left:890.500px;top:546px;font-size:5.700px;color:#333">6 object(s)</div><div class="t" id="s2" style="transform-origin:0 0;transform:scaleX(0.9273);left:944.300px;top:546px;font-size:5.700px;color:#333">0m:23s</div>
</body></html>
